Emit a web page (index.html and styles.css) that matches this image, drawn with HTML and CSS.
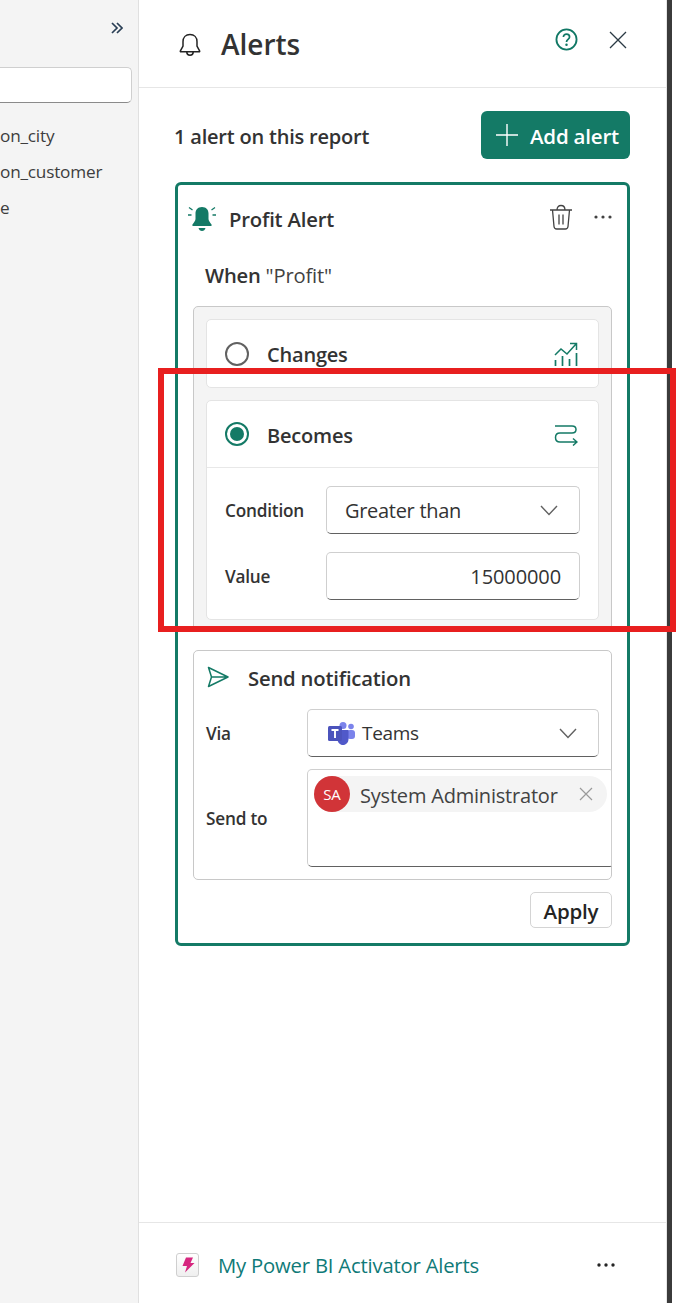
FILE: index.html
```html
<!DOCTYPE html>
<html lang="en">
<head>
<meta charset="utf-8">
<title>Alerts</title>
<link rel="stylesheet" href="styles.css">
</head>
<body>
<div class="app">
  <aside class="fields">
    <div class="fields-head">
      <svg class="chev" width="12" height="12" viewBox="0 0 12 12"><path d="M1 1l5 5-5 5M6 1l5 5-5 5" fill="none" stroke="#2a3f55" stroke-width="1.700"/></svg>
    </div>
    <div class="search"></div>
    <ul class="field-list">
      <li>on_city</li>
      <li>on_customer</li>
      <li>e</li>
    </ul>
  </aside>
  <main class="panel">
    <header class="panel-head">
      <div class="panel-title">
        <svg width="24" height="24" viewBox="0 0 24 24"><path d="M12 1.500c-4.200 0-7 3-7 7.200v4.400L2.400 17.800c-.3.600 0 1 .6 1h18c.6 0 .9-.4.6-1L19 13.100V8.700c0-4.200-2.800-7.200-7-7.200z" fill="none" stroke="#242424" stroke-width="1.500" stroke-linejoin="round"/><path d="M8.800 19a3.200 3.200 0 0 0 6.400 0" fill="none" stroke="#242424" stroke-width="1.500"/></svg>
        <h1>Alerts</h1>
      </div>
      <div class="panel-actions">
        <svg width="23" height="23" viewBox="0 0 24 24"><circle cx="12" cy="12" r="10.500" fill="none" stroke="#117865" stroke-width="1.900"/><path d="M8.800 9.500c0-1.900 1.400-3.100 3.200-3.100s3.200 1.200 3.200 2.900c0 2.600-3.200 2.500-3.200 5.200" fill="none" stroke="#117865" stroke-width="1.800"/><circle cx="12" cy="17.500" r="1.300" fill="#117865"/></svg>
        <svg width="18" height="18" viewBox="0 0 18 18"><path d="M1 1l16 16M17 1L1 17" fill="none" stroke="#2b3a44" stroke-width="1.300"/></svg>
      </div>
    </header>
    <div class="panel-body">
      <div class="summary">
        <span class="summary-text">1 alert on this report</span>
        <button class="add-btn">
          <svg width="24" height="24" viewBox="0 0 24 24"><path d="M12 1v22M1 12h22" stroke="#fff" stroke-width="1.400" fill="none"/></svg>
          <span>Add alert</span>
        </button>
      </div>
      <section class="alert-card">
        <div class="alert-head">
          <svg class="alert-bell" width="28" height="26" viewBox="0 0 28 26"><path d="M14 1c-4.200 0-6.500 2.900-6.500 6.500v5.500c0 1.700-1.500 3.300-3 5.500-.5.700-.2 1.500.6 1.500h17.800c.8 0 1.100-.8.600-1.500-1.500-2.200-3-3.800-3-5.500V7.500C20.500 3.900 18.200 1 14 1z" fill="#147a66"/><path d="M10.500 22h7c-.5 2-1.800 3-3.500 3s-3-1-3.500-3z" fill="#147a66"/><path d="M1 1.500l3.500 2.500M27 1.500L23.500 4M0 9h3.500M28 9h-3.500" stroke="#147a66" stroke-width="1.300" fill="none"/></svg>
          <h2>Profit Alert</h2>
          <svg class="trash" width="24" height="26" viewBox="0 0 24 26"><path d="M1 6h22M8 6c0-3 1.500-4.500 4-4.500S16 3 16 6M3.500 6l1.500 16.500c.2 1.600 1 2.500 2.700 2.500h8.600c1.700 0 2.500-.9 2.700-2.500L20.500 6M10 10.500v10M14 10.500v10" fill="none" stroke="#424242" stroke-width="1.300"/></svg>
          <svg class="dots" width="18" height="4" viewBox="0 0 18 4"><circle cx="2" cy="2" r="1.600" fill="#424242"/><circle cx="9" cy="2" r="1.600" fill="#424242"/><circle cx="16" cy="2" r="1.600" fill="#424242"/></svg>
        </div>
        <p class="when"><b>When</b> "Profit"</p>
        <div class="rule-box">
          <div class="rule-card rule-changes">
            <div class="rule-head">
              <span class="radio"></span>
              <span class="rule-name">Changes</span>
              <svg width="24" height="24" viewBox="0 0 24 24"><path d="M1 13l6-6 6 5 9-10M16 1.500h6.500V8" fill="none" stroke="#147a66" stroke-width="1.500"/><path d="M1.500 18v6M8.500 14v10M15.500 17v7M22.500 11v13" fill="none" stroke="#147a66" stroke-width="1.700"/></svg>
            </div>
          </div>
          <div class="rule-card rule-becomes">
            <div class="rule-head">
              <span class="radio radio-on"></span>
              <span class="rule-name">Becomes</span>
              <svg class="route" width="24" height="22" viewBox="0 0 24 22"><path d="M1 2h17c2.500 0 4 1.500 4 3.500S20.500 9 18 9H6c-2.700 0-4.500 1.700-4.500 4.500S3.300 18 6 18h17M19 14.500l4 3.500-4 3.500" fill="none" stroke="#147a66" stroke-width="1.500"/></svg>
            </div>
            <div class="rule-form">
              <label class="form-label">Condition</label>
              <div class="control">
                <span>Greater than</span>
                <svg class="caret" width="18" height="11" viewBox="0 0 18 11"><path d="M1 1l8 8.500L17 1" fill="none" stroke="#616161" stroke-width="1.400"/></svg>
              </div>
              <label class="form-label">Value</label>
              <div class="control control-num"><span>15000000</span></div>
            </div>
          </div>
        </div>
        <div class="send-box">
          <div class="send-head">
            <svg width="22" height="22" viewBox="0 0 22 22"><path d="M1.500 1.500L21 11 1.500 20.500 4.500 11zM4.500 11H21" fill="none" stroke="#147a66" stroke-width="1.500" stroke-linejoin="round"/></svg>
            <h3>Send notification</h3>
          </div>
          <div class="send-form">
            <label class="form-label">Via</label>
            <div class="control control-via">
              <svg class="teams" width="27" height="23" viewBox="0 0 27 23">
                <circle cx="23" cy="4.500" r="2.800" fill="#7b83eb"/>
                <rect x="19" y="8" width="8" height="9" rx="3" fill="#7b83eb"/>
                <circle cx="15" cy="3.500" r="3.500" fill="#7b83eb"/>
                <path d="M9 8h11.500v9c0 3.500-2.500 6-5.500 6s-5.500-2.500-5.500-6z" fill="#5059c9"/>
                <rect x="0" y="4" width="14" height="15" rx="1.500" fill="#4b53bc"/>
                <path d="M3.500 8h7M7 8v8" stroke="#fff" stroke-width="1.900" fill="none"/>
              </svg>
              <span>Teams</span>
              <svg class="caret" width="18" height="11" viewBox="0 0 18 11"><path d="M1 1l8 8.500L17 1" fill="none" stroke="#616161" stroke-width="1.400"/></svg>
            </div>
            <label class="form-label">Send to</label>
            <div class="people">
              <div class="chip">
                <span class="avatar">SA</span>
                <span class="chip-name">System Administrator</span>
                <svg class="chip-x" width="14" height="14" viewBox="0 0 14 14"><path d="M1 1l12 12M13 1L1 13" fill="none" stroke="#9a9a9a" stroke-width="1.200"/></svg>
              </div>
            </div>
          </div>
        </div>
        <div class="apply-row"><button class="apply-btn">Apply</button></div>
      </section>
    </div>
    <footer class="panel-foot">
      <span class="activator">
        <svg width="14" height="16" viewBox="0 0 14 16"><path d="M5 0.500h7L9.500 6H13.500L4 15.500 6 9H1.500z" fill="#d6267f"/></svg>
      </span>
      <a class="foot-link">My Power BI Activator Alerts</a>
      <svg class="foot-dots" width="18" height="4" viewBox="0 0 18 4"><circle cx="2" cy="2" r="1.700" fill="#242424"/><circle cx="9" cy="2" r="1.700" fill="#242424"/><circle cx="16" cy="2" r="1.700" fill="#242424"/></svg>
    </footer>
  </main>
  <div class="edge"></div>
  <div class="highlight"></div>
</div>
</body>
</html>
```

FILE: styles.css
```css
* { box-sizing: border-box; }
html, body { margin: 0; padding: 0; }
body { background: #fff; color: #242424; font-family: "Open Sans", "Noto Sans", sans-serif; }
h1, h2, h3, p, ul { margin: 0; padding: 0; }

.app { position: relative; display: flex; width: 677px; height: 1303px; overflow: hidden; background: #fff; }

.fields { flex: 0 0 139px; background: #f4f4f4; border-right: 1px solid #e0e0e0; padding-top: 16px; overflow: hidden; }
.fields-head { height: 24px; display: flex; align-items: center; justify-content: flex-end; padding-right: 15px; margin-bottom: 27px; }
.search { width: 132px; height: 36px; background: #fff; border: 1px solid #cfcfcf; border-bottom-color: #8a8a8a; border-left: 0; border-radius: 0 5px 5px 0; }
.field-list { list-style: none; margin-top: 15px; }
.field-list li { height: 36px; line-height: 36px; font-size: 17.200px; color: #3d3d3d; letter-spacing: -0.2px; }

.panel { flex: 0 0 528px; min-width: 0; display: flex; flex-direction: column; border-right: 1px solid #e6e6e6; }
.panel-head { flex: 0 0 88px; display: flex; align-items: center; justify-content: space-between; padding: 0 39px 0 39px; border-bottom: 1px solid #e6e6e6; }
.panel-title { display: flex; align-items: center; gap: 19px; padding-top: 3px; }
.panel-title h1 { font-size: 28px; font-weight: 600; line-height: 36px; color: #333; margin-top: -3px; }
.panel-actions { display: flex; align-items: center; gap: 31px; margin-bottom: 8px; }

.panel-body { flex: 1; min-width: 0; padding: 23px 36px 0 36px; }
.summary { display: flex; align-items: center; justify-content: space-between; height: 48px; }
.summary-text { margin-left: -1px; font-size: 20px; font-weight: 600; color: #333; letter-spacing: -0.2px; padding-top: 3px; }
.add-btn { display: flex; align-items: center; gap: 11px; width: 149px; height: 48px; padding: 0 0 0 14px; background: #147a66; border: 0; border-radius: 6px; color: #fff; font-family: inherit; font-size: 20.500px; font-weight: 600; letter-spacing: -0.2px; }
.add-btn span { padding-top: 2px; }

.alert-card { margin-top: 23px; border: 3px solid #147a66; border-radius: 6px; padding: 0 15px 15px; }
.alert-head { height: 68px; display: flex; align-items: center; }
.alert-bell { margin-left: -5px; }
.alert-head h2 { flex: 1; margin-left: 13px; font-size: 20.300px; font-weight: 600; color: #333; letter-spacing: -0.2px; }
.trash { margin-top: -4px; }
.dots { margin: -4px 0 0 21px; }
.when { height: 46px; line-height: 44px; padding-left: 12px; margin-bottom: 7px; font-size: 20.200px; color: #424242; letter-spacing: -0.2px; }
.when b { font-weight: 600; color: #333; }

.rule-box { height: 325px; padding: 12px; background: #f4f4f4; border: 1px solid #c8c8c8; border-radius: 5px; }
.rule-card { background: #fff; border: 1px solid #e4e4e4; border-radius: 5px; }
.rule-changes { height: 69px; margin-bottom: 12px; }
.rule-head { height: 67px; display: flex; align-items: center; gap: 18px; padding: 0 20px 0 18px; }
.rule-becomes .rule-head { border-bottom: 1px solid #e8e8e8; }
.rule-name { flex: 1; font-size: 20px; font-weight: 600; color: #333; letter-spacing: -0.2px; padding-top: 1px; }
.rule-becomes .rule-name { padding-top: 3px; }
.route { margin-top: 2px; }
.radio { flex: none; width: 24px; height: 24px; border: 2px solid #616161; border-radius: 50%; background: #fff; }
.radio-on { border-color: #147a66; padding: 3px; background: #147a66 content-box; }

.rule-form { display: grid; grid-template-columns: 101px 254px; grid-auto-rows: 48px; row-gap: 18px; align-items: center; padding: 18px 18px 19px 18px; }
.form-label { font-size: 17.200px; font-weight: 600; color: #333; letter-spacing: -0.2px; }
.control { height: 48px; display: flex; align-items: center; justify-content: space-between; padding: 0 21px 0 18px; background: #fff; border: 1px solid #cfcfcf; border-bottom-color: #616161; border-radius: 5px; font-size: 20px; color: #333; letter-spacing: -0.3px; }
.control > span { padding-top: 1px; }
.control-num { justify-content: flex-end; padding-right: 18px; letter-spacing: -0.1px; }

.send-box { margin-top: 19px; padding: 0 12px 12px 12px; border: 1px solid #c8c8c8; border-radius: 5px; }
.send-head { height: 52px; display: flex; align-items: center; gap: 19px; padding-left: 1px; margin-bottom: 6px; }
.send-head h3 { font-size: 20.300px; font-weight: 600; color: #333; letter-spacing: -0.2px; padding-top: 1px; }
.send-form { display: grid; grid-template-columns: 101px minmax(0, 1fr); grid-template-rows: 48px 98px; row-gap: 12px; align-items: center; }
.control-via { justify-content: flex-start; padding-left: 20px; }
.control-via span { flex: 1; margin-left: 7px; margin-top: -2px; font-size: 19px; }
.people { height: 98px; margin-right: -13px; padding: 6px 4px 6px 6px; background: #fff; border: 1px solid #cfcfcf; border-bottom-color: #616161; border-radius: 5px 2px 2px 5px; }
.chip { display: flex; align-items: center; height: 36px; background: #f4f4f4; border-radius: 18px; }
.avatar { flex: none; width: 36px; height: 36px; display: flex; align-items: center; justify-content: center; background: #d13438; border-radius: 50%; color: #fff; font-size: 15px; }
.chip-name { flex: 1; margin-left: 10px; padding-top: 2px; font-size: 20px; color: #424242; letter-spacing: -0.2px; }
.chip-x { margin-right: 14px; }

.apply-row { display: flex; justify-content: flex-end; margin-top: 12px; }
.apply-btn { width: 82px; height: 36px; padding: 2px 0 0; background: #fff; border: 1px solid #d4d4d4; border-radius: 5px; font-family: inherit; font-size: 20.500px; font-weight: 600; color: #242424; letter-spacing: -0.2px; }

.panel-foot { flex: 0 0 81px; display: flex; align-items: center; padding: 3px 51px 0 37px; border-top: 1px solid #e6e6e6; }
.activator { flex: none; width: 23px; height: 24px; display: flex; align-items: center; justify-content: center; background: linear-gradient(#fff, #efefef); border: 1px solid #cfcfcf; border-radius: 3px; }
.foot-link { flex: 1; margin-left: 19px; font-size: 20.300px; color: #0f7a78; letter-spacing: -0.2px; }

.edge { flex: 0 0 5px; background: #3b3b3b; }

.highlight { position: absolute; left: 158px; top: 368px; width: 518px; height: 264px; border: 6px solid #e81f1f; pointer-events: none; }
```
